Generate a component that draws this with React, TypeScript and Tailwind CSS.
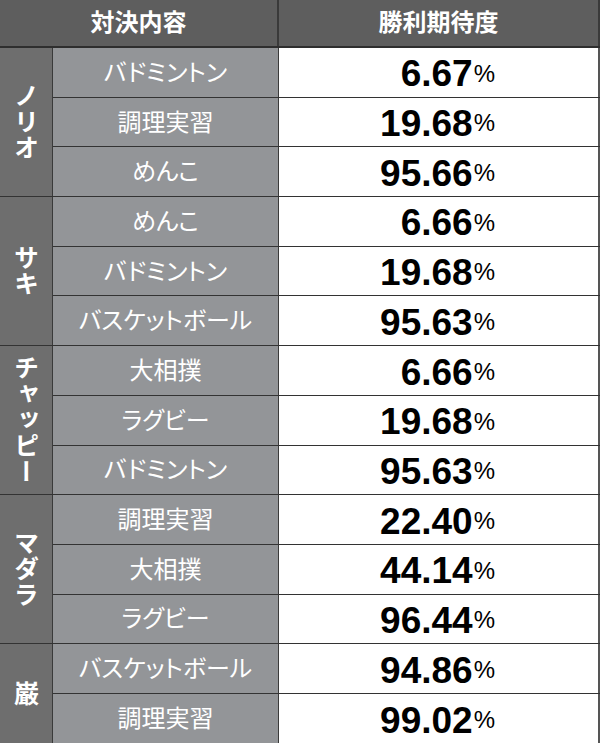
const groups = [
  {
    name: "ノリオ",
    rows: [
      { game: "バドミントン", rate: "6.67" },
      { game: "調理実習", rate: "19.68" },
      { game: "めんこ", rate: "95.66" },
    ],
  },
  {
    name: "サキ",
    rows: [
      { game: "めんこ", rate: "6.66" },
      { game: "バドミントン", rate: "19.68" },
      { game: "バスケットボール", rate: "95.63" },
    ],
  },
  {
    name: "チャッピー",
    rows: [
      { game: "大相撲", rate: "6.66" },
      { game: "ラグビー", rate: "19.68" },
      { game: "バドミントン", rate: "95.63" },
    ],
  },
  {
    name: "マダラ",
    rows: [
      { game: "調理実習", rate: "22.40" },
      { game: "大相撲", rate: "44.14" },
      { game: "ラグビー", rate: "96.44" },
    ],
  },
  {
    name: "巌",
    rows: [
      { game: "バスケットボール", rate: "94.86" },
      { game: "調理実習", rate: "99.02" },
    ],
  },
];

const jp = "font-['Noto_Sans_CJK_JP',sans-serif]";

export default function App() {
  return (
    <div className="w-[600px] h-[743px] bg-white flex flex-col overflow-hidden">
      {/* header */}
      <div
        className={`h-[48px] shrink-0 flex bg-[#5e5e5e] border-b-2 border-[#2e2e2e] text-white font-bold text-[24px] ${jp}`}
      >
        <div className="w-[279px] border-r-2 border-[#3a3a3a] flex items-center justify-center pb-[4px]">
          対決内容
        </div>
        <div className="flex-1 border-r-2 border-[#3a3a3a] flex items-center justify-center pb-[4px]">
          勝利期待度
        </div>
      </div>

      {/* body */}
      <div className="flex-1 flex flex-col">
        {groups.map((g, gi) => (
          <div
            key={g.name}
            className={`flex ${g.rows.length === 3 ? "flex-[3]" : "flex-[2]"} ${
              gi < groups.length - 1 ? "border-b border-[#333]" : ""
            }`}
          >
            <div className="w-[53px] shrink-0 bg-[#6e6e6e] border-r border-[#3a3a3a] flex items-center justify-center">
              <span
                className={`[writing-mode:vertical-rl] text-white font-bold text-[25px] leading-none tracking-[1px] ${jp}`}
              >
                {g.name}
              </span>
            </div>
            <div className="flex-1 flex flex-col">
              {g.rows.map((r, ri) => (
                <div
                  key={ri}
                  className={`flex-1 flex ${
                    ri < g.rows.length - 1 ? "border-b border-[#333]" : ""
                  }`}
                >
                  <div
                    className={`w-[226px] shrink-0 bg-[#939598] border-r border-[#3a3a3a] flex items-center justify-center text-white text-[24px] font-normal pb-[3px] [font-feature-settings:'palt'] ${jp}`}
                  >
                    {r.game}
                  </div>
                  <div className="flex-1 border-r-2 border-[#555] flex items-center justify-end pr-[103px] pt-[3px] font-['Liberation_Sans',Arial,sans-serif] text-black">
                    <span className="text-[37px] font-bold leading-none">
                      {r.rate}
                    </span>
                    <span className="text-[24px] font-normal leading-none self-end mb-[11px] ml-[1px]">
                      %
                    </span>
                  </div>
                </div>
              ))}
            </div>
          </div>
        ))}
      </div>
    </div>
  );
}
